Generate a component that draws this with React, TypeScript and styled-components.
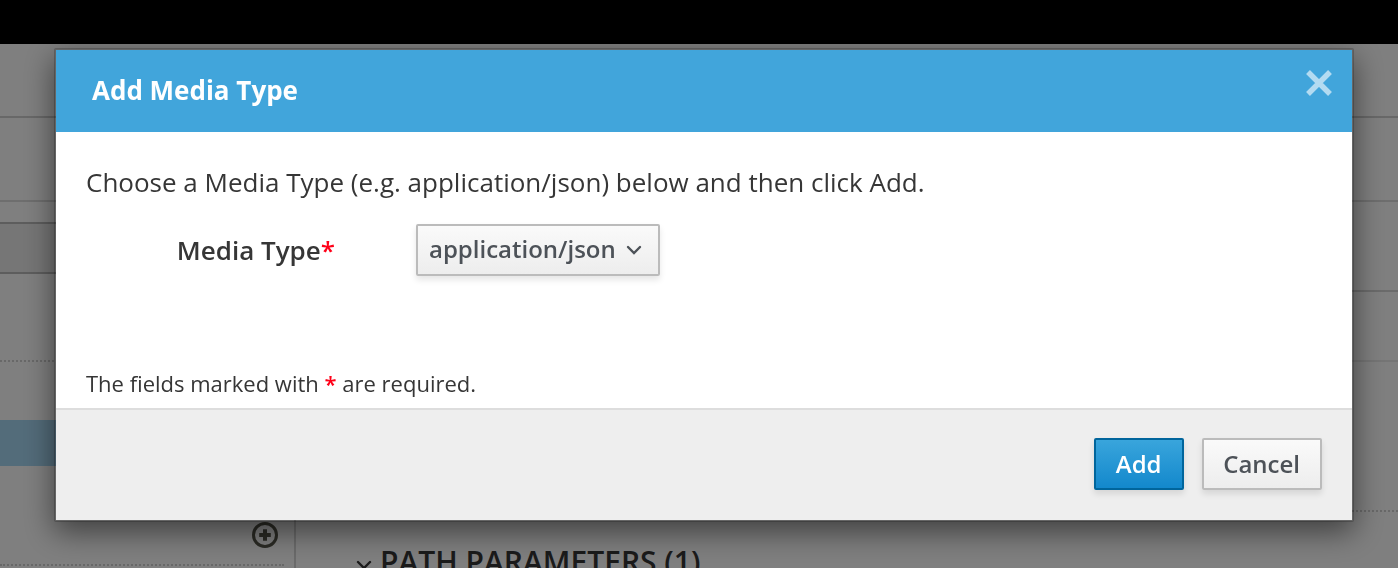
import React from "react";
import styled, { createGlobalStyle, css } from "styled-components";

const GlobalStyle = createGlobalStyle`
  *, *::before, *::after { box-sizing: border-box; }
  body {
    margin: 0;
    background: #fff;
    color: #363636;
    font-family: "Open Sans", "Liberation Sans", sans-serif;
    font-size: 26px;
    line-height: 44px;
  }
`;

const Page = styled.div`
  display: flex;
  flex-direction: column;
  height: 100vh;
  overflow: hidden;
`;

const Masthead = styled.header`
  height: 44px;
  flex: none;
  background: #000;
`;

type BandProps = {
  $height: number;
  $line?: string;
  $dotted?: boolean;
  $fill?: string;
};

const Band = styled.div<BandProps>`
  flex: none;
  height: ${(p) => p.$height}px;
  background: ${(p) => p.$fill ?? "transparent"};
  ${(p) =>
    p.$line &&
    css`
      border-bottom: 2px ${p.$dotted ? "dotted" : "solid"} ${p.$line};
    `}
`;

const Columns = styled.div`
  display: flex;
  flex: 1;
  min-height: 0;
`;

const Sidebar = styled.aside`
  display: flex;
  flex-direction: column;
  width: 296px;
  flex: none;
  border-right: 2px solid #d6d6d6;
`;

const SectionHead = styled.div`
  display: flex;
  flex: none;
  justify-content: flex-end;
  align-items: flex-end;
  height: 100px;
  margin-right: 10px;
  padding: 0 6px 16px 0;
  border-bottom: 2px dotted #d1d1d1;
`;

const IconButton = styled.button`
  display: flex;
  padding: 0;
  border: 0;
  background: none;
  color: #56564a;
`;

const Main = styled.main`
  display: flex;
  flex-direction: column;
  flex: 1;
`;

const SectionTitle = styled.h2`
  display: flex;
  flex: none;
  align-items: center;
  gap: 8px;
  margin: 28px 0 0 60px;
  color: #363636;
  font-size: 30px;
  font-weight: 600;
  line-height: 44px;

  svg { margin-top: 6px; }
`;

const Backdrop = styled.div`
  position: fixed;
  inset: 44px 0 0;
  padding: 4px 44px 0 54px;
  background: rgba(0, 0, 0, 0.5);
`;

const Dialog = styled.section`
  border: 2px solid rgba(0, 0, 0, 0.2);
  border-radius: 2px;
  background: #fff;
  background-clip: padding-box;
  box-shadow: 0 10px 30px rgba(0, 0, 0, 0.5);
`;

const DialogHeader = styled.header`
  display: flex;
  justify-content: space-between;
  align-items: flex-start;
  padding: 18px 20px 20px 36px;
  background: #41a5db;
  color: #fff;
`;

const DialogTitle = styled.h1`
  margin: 0;
  font-size: 26px;
  font-weight: 700;
  line-height: 44px;
`;

const CloseButton = styled(IconButton)`
  color: #b3dbf1;
`;

const DialogBody = styled.div`
  padding: 28px 30px 3px;
`;

const Intro = styled.p`
  margin: 0 0 20px;
`;

const Field = styled.div`
  display: flex;
  align-items: center;
`;

const FieldLabel = styled.label`
  width: 249px;
  margin-right: 81px;
  text-align: right;
  font-weight: 600;
`;

const Required = styled.span`
  color: #ff0018;
  font-weight: 600;
`;

const buttonFace = css`
  height: 52px;
  border: 2px solid #bbb;
  border-radius: 2px;
  background: linear-gradient(#fafafa, #ededed);
  box-shadow: 0 4px 6px rgba(3, 3, 3, 0.1);
  color: #4d5258;
  font: 600 24px "Open Sans", "Liberation Sans", sans-serif;
`;

const SelectBox = styled.div`
  display: grid;
  align-items: center;

  > * { grid-area: 1 / 1; }
  > svg {
    justify-self: end;
    margin-right: 18px;
    pointer-events: none;
    color: #4d5258;
  }
`;

const Select = styled.select`
  ${buttonFace}
  appearance: none;
  width: 244px;
  padding: 0 40px 4px 11px;
`;

const Note = styled.p`
  margin: 85px 0 0;
  font-size: 22px;
`;

const DialogFooter = styled.footer`
  display: flex;
  justify-content: flex-end;
  gap: 18px;
  padding: 28px 30px 30px;
  border-top: 2px solid #ddd;
  background: #eee;
`;

const Button = styled.button<{ $primary?: boolean }>`
  ${buttonFace}
  min-width: 90px;
  padding: 0 20px 2px 19px;
  ${(p) =>
    p.$primary &&
    css`
      border-color: #00659c;
      background: linear-gradient(#39a5dc, #1388cc);
      color: #fff;
    `}
`;

const Chevron = () => (
  <svg width="16" height="12" viewBox="0 0 16 12" fill="none" aria-hidden="true">
    <path d="M2 3l6 6 6-6" stroke="currentColor" strokeWidth="2.4" strokeLinecap="round" />
  </svg>
);

const PlusCircle = () => (
  <svg width="26" height="26" viewBox="0 0 26 26" fill="none" stroke="currentColor" aria-hidden="true">
    <circle cx="13" cy="13" r="11.5" strokeWidth="3" />
    <path d="M13 7.2v11.6M7.2 13h11.6" strokeWidth="4" />
  </svg>
);

const Cross = () => (
  <svg width="26" height="28" viewBox="0 0 26 28" fill="none" aria-hidden="true">
    <path d="M2 4l22 22M24 4L2 26" stroke="currentColor" strokeWidth="5.4" />
  </svg>
);

export default function App() {
  return (
    <>
      <GlobalStyle />
      <Page>
        <Masthead />
        <Band $height={74} $line="#d1d1d1" />
        <Band $height={84} $line="#dcdcdc" />
        <Columns>
          <Sidebar>
            <Band $height={22} $line="#bbb" />
            <Band $height={50} $line="#bbb" $fill="#ededed" />
            <Band $height={88} $line="#d1d1d1" $dotted />
            <Band $height={58} />
            <Band $height={46} $fill="#a7d8f4" />
            <SectionHead>
              <IconButton type="button" aria-label="Add item">
                <PlusCircle />
              </IconButton>
            </SectionHead>
          </Sidebar>
          <Main>
            <Band $height={90} $line="#d6d6d6" />
            <Band $height={70} $line="#eaeaea" />
            <Band $height={150} $line="#d1d1d1" $dotted />
            <SectionTitle>
              <Chevron />
              PATH PARAMETERS (1)
            </SectionTitle>
          </Main>
        </Columns>
      </Page>
      <Backdrop>
        <Dialog role="dialog" aria-modal="true" aria-labelledby="dialog-title">
          <DialogHeader>
            <DialogTitle id="dialog-title">Add Media Type</DialogTitle>
            <CloseButton type="button" aria-label="Close">
              <Cross />
            </CloseButton>
          </DialogHeader>
          <DialogBody>
            <Intro>Choose a Media Type (e.g. application/json) below and then click Add.</Intro>
            <Field>
              <FieldLabel htmlFor="media-type">
                Media Type<Required>*</Required>
              </FieldLabel>
              <SelectBox>
                <Select id="media-type" defaultValue="application/json">
                  <option>application/json</option>
                </Select>
                <Chevron />
              </SelectBox>
            </Field>
            <Note>
              The fields marked with <Required>*</Required> are required.
            </Note>
          </DialogBody>
          <DialogFooter>
            <Button type="button" $primary>
              Add
            </Button>
            <Button type="button">Cancel</Button>
          </DialogFooter>
        </Dialog>
      </Backdrop>
    </>
  );
}
